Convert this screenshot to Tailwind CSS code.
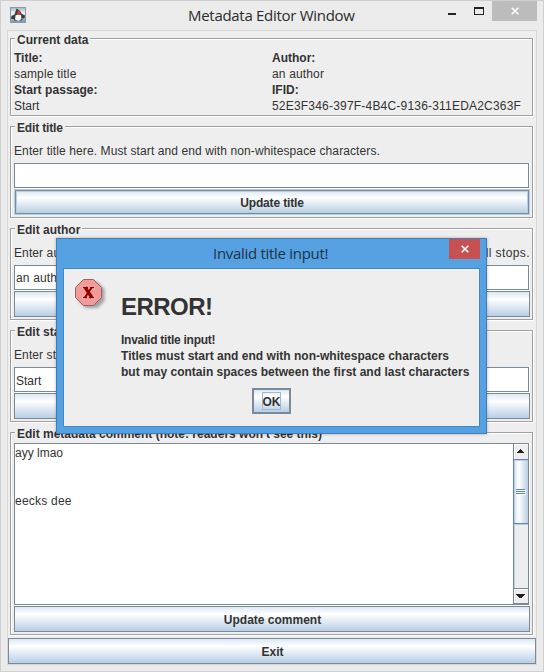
<!DOCTYPE html>
<html lang="en">
<head>
<meta charset="utf-8">
<title>Metadata Editor Window</title>
<script src="https://cdn.jsdelivr.net/npm/@tailwindcss/browser@4"></script>
</head>
<body class="h-[672px] w-[544px] overflow-hidden bg-[#ebebeb] font-['Liberation_Sans',Arial,sans-serif] text-[12px] leading-[16px] text-[#333]">
<main class="relative flex h-[672px] w-[544px] flex-col border border-[#cfcfcf] px-[6px] pb-[6px]">
  <header class="relative flex h-[29px] shrink-0 items-start">
    <svg class="mt-[6px] ml-[3px] size-4" viewBox="0 0 16 16">
      <defs><linearGradient id="ic" x2="0" y2="1"><stop stop-color="#9db4c8"/><stop offset=".35" stop-color="#eef2f5"/><stop offset=".6" stop-color="#d7e0e8"/><stop offset="1" stop-color="#6f8aa6"/></linearGradient></defs>
      <rect x=".5" y=".5" width="15" height="15" fill="url(#ic)" stroke="#8b9baa"/>
      <path d="M6.500 1.500L9.500 3.500L12 7L15 8.500L14.500 11.500L12.500 11.500L12 13.500H4L4 12L1 12L1.500 9L4.500 7.500z" fill="#3d3d40"/>
      <path d="M5.500 8.500L7.500 7.500L11 8L11.500 12L8.500 14L5 12.500z" fill="#f4f4f4"/>
      <ellipse cx="9" cy="5.700" rx="1.800" ry="1.900" fill="#d9362c"/>
    </svg>
    <h1 class="absolute top-[3px] left-[181px] font-['Open_Sans',sans-serif] text-[15px] leading-[22px] tracking-[-0.29px] whitespace-nowrap text-[#2b2b2b]">Metadata Editor Window</h1>
    <svg class="absolute top-0 right-[44px] h-5 w-[48px]" viewBox="0 0 48 20" shape-rendering="crispEdges"><path d="M3 12h8v2H3z" fill="#222"/><path d="M29 6h10v8H29zM30 8v5h8V8z" fill="#222" fill-rule="evenodd"/></svg>
    <div class="absolute top-0 right-0 flex h-5 w-[45px] items-center justify-center bg-[#bcbcbc]">
      <svg class="size-2" viewBox="0 0 8 8"><path d="M.7.7l6.600 6.600M7.300.7L.7 7.300" stroke="#fff" stroke-width="1.600"/></svg>
    </div>
  </header>
  <div class="flex h-[635px] w-[530px] shrink-0 flex-col border border-[#d6d6d6] bg-[#eee]">
    <div class="flex flex-col gap-[9px] px-[2px] pt-[7px]">

      <section class="relative h-[79px] w-[524px]">
        <div class="absolute inset-0 border border-white"></div>
        <div class="absolute inset-0 mr-px mb-px border border-[#a0a0a0] shadow-[inset_1px_1px_0_#fff]"></div>
        <h2 class="absolute top-[-6px] left-[5px] bg-[#eee] px-[2px] font-bold whitespace-nowrap">Current data</h2>
        <div class="relative grid grid-cols-[258px_1fr] pt-[12px] pl-[4px] whitespace-nowrap">
          <b>Title:</b><b>Author:</b>
          <span class="tracking-[0.15px]">sample title</span><span class="tracking-[0.15px]">an author</span>
          <b class="tracking-[0.07px]">Start passage:</b><b>IFID:</b>
          <span>Start</span><span class="tracking-[0.2px]">52E3F346-397F-4B4C-9136-311EDA2C363F</span>
        </div>
      </section>

      <section class="relative h-[93px] w-[524px]">
        <div class="absolute inset-0 border border-white"></div>
        <div class="absolute inset-0 mr-px mb-px border border-[#a0a0a0] shadow-[inset_1px_1px_0_#fff]"></div>
        <h2 class="absolute top-[-6px] left-[5px] bg-[#eee] px-[2px] font-bold tracking-[-0.15px] whitespace-nowrap">Edit title</h2>
        <div class="relative flex flex-col pt-[17px] pl-[4px]">
          <p class="h-[20px] tracking-[0.105px] whitespace-nowrap">Enter title here. Must start and end with non-whitespace characters.</p>
          <div class="h-[26px] w-[516px] border-r border-b border-white"><div class="h-[25px] border border-[#7a8a99] bg-white"></div></div>
          <div class="h-[26px] w-[516px] border border-[#b8cfe5]"><div class="flex h-[24px] items-center justify-center border border-[#7a8a99] bg-linear-to-b from-[#dde8f3] via-white via-30% to-[#b8cfe5] pt-[2px] font-bold tracking-[-0.15px] shadow-[inset_0_0_0_1px_#b8cfe5]">Update title</div></div>
        </div>
      </section>

      <section class="relative h-[93px] w-[524px]">
        <div class="absolute inset-0 border border-white"></div>
        <div class="absolute inset-0 mr-px mb-px border border-[#a0a0a0] shadow-[inset_1px_1px_0_#fff]"></div>
        <h2 class="absolute top-[-6px] left-[5px] bg-[#eee] px-[2px] font-bold whitespace-nowrap">Edit author</h2>
        <div class="relative flex flex-col pt-[17px] pl-[4px]">
          <p class="flex h-[20px] w-[516px] justify-between whitespace-nowrap"><span class="tracking-[0.1px]">Enter au</span><span class="tracking-[0.4px]">full stops.</span></p>
          <div class="h-[26px] w-[516px] border-r border-b border-white"><div class="flex h-[25px] items-center border border-[#7a8a99] bg-white pt-px pl-px tracking-[0.15px]">an author</div></div>
          <div class="h-[26px] w-[516px] border border-[#7a8a99] bg-linear-to-b from-[#dde8f3] via-white via-30% to-[#b8cfe5]"></div>
        </div>
      </section>

      <section class="relative h-[93px] w-[524px]">
        <div class="absolute inset-0 border border-white"></div>
        <div class="absolute inset-0 mr-px mb-px border border-[#a0a0a0] shadow-[inset_1px_1px_0_#fff]"></div>
        <h2 class="absolute top-[-6px] left-[5px] bg-[#eee] px-[2px] font-bold whitespace-nowrap">Edit start</h2>
        <div class="relative flex flex-col pt-[17px] pl-[4px]">
          <p class="h-[20px] tracking-[0.1px] whitespace-nowrap">Enter st</p>
          <div class="h-[26px] w-[516px] border-r border-b border-white"><div class="flex h-[25px] items-center border border-[#7a8a99] bg-white pt-[2px] pl-px">Start</div></div>
          <div class="h-[26px] w-[516px] border border-[#7a8a99] bg-linear-to-b from-[#dde8f3] via-white via-30% to-[#b8cfe5]"></div>
        </div>
      </section>

      <section class="relative h-[204px] w-[524px]">
        <div class="absolute inset-0 border border-white"></div>
        <div class="absolute inset-0 mr-px mb-px border border-[#a0a0a0] shadow-[inset_1px_1px_0_#fff]"></div>
        <h2 class="absolute top-[-6px] left-[5px] bg-[#eee] px-[2px] font-bold whitespace-nowrap">Edit metadata comment (note: readers won't see this)</h2>
        <div class="relative flex flex-col pt-[11px] pl-[4px]">
          <div class="h-[163px] w-[516px] border-r border-b border-white">
            <div class="flex h-[162px] border border-[#7a8a99] bg-white">
              <div class="flex-1 pt-px leading-[16px]">ayy lmao<br><br><br><span class="tracking-[0.22px]">eecks dee</span></div>
              <svg class="h-[160px] w-[15px]" viewBox="0 0 15 160" shape-rendering="crispEdges">
                <defs><linearGradient id="th"><stop stop-color="#dde8f3"/><stop offset=".3" stop-color="#fff"/><stop offset="1" stop-color="#b8cfe5"/></linearGradient></defs>
                <path d="M0 0h15v160H0z" fill="#eee"/>
                <path d="M0 0h1v160H0z" fill="#7a8a99"/>
                <path d="M1 80h1v64H1z" fill="#b8cfe5"/>
                <path d="M1 0h14v1H2v14H1z" fill="#fff"/>
                <path d="M7 5h1v1H7zM6 6h3v1H6zM5 7h5v1H5zM4 8h7v1H4z" fill="#222"/>
                <path d="M0 15h15v65H0z" fill="#6382bf"/>
                <path d="M1 16h14v63H1z" fill="#b8cfe5"/>
                <path d="M2 17h13v62H2z" fill="url(#th)"/>
                <path d="M1 80h14v1H1z" fill="#b8cfe5"/>
                <path d="M4 46h9v1H4zM4 48h9v1H4zM4 50h9v1H4z" fill="#fff"/>
                <path d="M3 45h9v1H3zM3 47h9v1H3zM3 49h9v1H3z" fill="#6382bf"/>
                <path d="M1 144h14v1H1zM1 159h14v1H1z" fill="#7a8a99"/>
                <path d="M1 145h14v1H2v13H1z" fill="#fff"/>
                <path d="M3 150h9v1H3zM4 151h7v1H4zM5 152h5v1H5zM6 153h3v1H6z" fill="#222"/>
              </svg>
            </div>
          </div>
          <div class="flex h-[26px] w-[516px] items-center justify-center border border-[#7a8a99] bg-linear-to-b from-[#dde8f3] via-white via-30% to-[#b8cfe5] pt-[2px] pl-px font-bold">Update comment</div>
        </div>
      </section>
    </div>
    <div class="mt-[2px] flex h-[26px] shrink-0 items-center justify-center border border-[#7a8a99] bg-linear-to-b from-[#dde8f3] via-white via-30% to-[#b8cfe5] pt-[2px] pl-px font-bold">Exit</div>
  </div>

  <div class="absolute top-[237px] left-[55px] flex h-[196px] w-[431px] flex-col border border-[#3f7db4] bg-[#55a1e2] px-[6px] pb-[6px] shadow-[0_0_3px_#0004]">
    <div class="relative h-[29px] shrink-0">
      <h2 class="absolute top-[3px] left-[150px] font-['Open_Sans',sans-serif] text-[15px] leading-[22px] tracking-[-0.3px] whitespace-nowrap text-[#1f3347]">Invalid title input!</h2>
      <div class="ml-auto flex h-5 w-[31px] items-center justify-center bg-[#c75050]">
        <svg class="size-2" viewBox="0 0 8 8"><path d="M.7.7l6.600 6.600M7.300.7L.7 7.300" stroke="#fff" stroke-width="1.600"/></svg>
      </div>
    </div>
    <div class="flex h-[159px] flex-col border border-[#4488c2] bg-[#eee]">
      <div class="flex h-[119px]">
        <svg class="mt-[9px] ml-[10px] h-[34px] w-[47px] overflow-visible" viewBox="0 0 47 34">
          <path d="M9 1h12l7 7v12l-7 7H9l-7-7V8z" transform="translate(2.500 3)" fill="#555" class="opacity-50 blur-[1.5px]"/>
          <path d="M9.500 1.500h10l8 8v10l-8 8h-10l-8-8v-10z" fill="#f09a9a" stroke="#a06060"/>
          <g fill="none" stroke-linecap="butt">
            <path d="M10.800 9.500L18 19.500M17.800 9.500L10.500 19.500M8.500 9.500h5M16 9.500h4.500M8.500 19.500h4.500M15 19.500h5.500" stroke="#ffc6c6" stroke-width="3.400"/>
            <path d="M11.200 9.500L17.800 19.500" stroke="#980000" stroke-width="3.400"/>
            <path d="M17.600 9.500L11 19.500" stroke="#980000" stroke-width="2.200"/>
            <path d="M9 9.500h5M16 9.500h4M9 19.500h4M15 19.500h5" stroke="#980000" stroke-width="1.600"/>
          </g>
        </svg>
        <div class="flex flex-col whitespace-nowrap">
          <h3 class="mt-[22px] text-[24px] leading-[32px] font-bold tracking-[-0.55px]">ERROR!</h3>
          <p class="mt-[9px] font-bold"><span class="tracking-[-0.25px]">Invalid title input!</span><br><span class="tracking-[0.015px]">Titles must start and end with non-whitespace characters</span><br><span class="tracking-[0.015px]">but may contain spaces between the first and last characters</span></p>
        </div>
      </div>
      <div class="ml-[188px] flex h-[26px] w-[39px] items-center justify-center border-2 border-[#7a8a99] bg-linear-to-b from-[#dde8f3] via-white via-30% to-[#b8cfe5]">
        <div class="flex h-[18px] w-[19px] items-center justify-center border border-[#a3b8cc] pt-[2px] font-bold">OK</div>
      </div>
    </div>
  </div>
</main>
</body>
</html>
